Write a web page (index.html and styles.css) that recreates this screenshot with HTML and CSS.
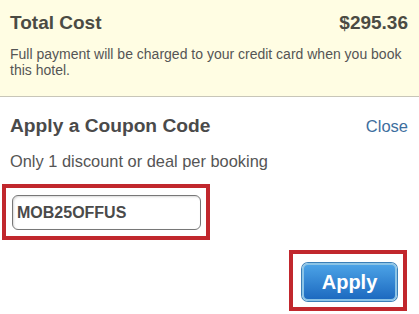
FILE: index.html
```html
<!DOCTYPE html>
<html lang="en">
<head>
  <meta charset="UTF-8" />
  <title>Apply a Coupon Code</title>
  <link rel="stylesheet" href="styles.css">
</head>
<body>
  <div class="total">
    <div class="total-row">
      <span>Total Cost</span>
      <span>$295.36</span>
    </div>
    <p class="note">Full payment will be charged to your credit card when you book this hotel.</p>
  </div>
  <div class="coupon">
    <div class="coupon-head">
      <h2>Apply a Coupon Code</h2>
      <a href="#" class="close">Close</a>
    </div>
    <p class="hint">Only 1 discount or deal per booking</p>
    <div class="mark input-mark">
      <input type="text" class="code" value="MOB25OFFUS" />
    </div>
    <div class="actions">
      <div class="mark button-mark">
        <button class="apply">Apply</button>
      </div>
    </div>
  </div>
</body>
</html>
```

FILE: styles.css
```css
body {
  margin: 0;
  font-family: Arial, "Liberation Sans", sans-serif;
  background-color: #fff;
  color: #4a4a4a;
  width: 419px;
  height: 314px;
  overflow: hidden;
}
.total {
  box-sizing: border-box;
  background-color: #fffde3;
  border-bottom: 1px solid #c8c6b8;
  padding: 12px 11px 0 10px;
  height: 97px;
}
.total-row {
  display: flex;
  justify-content: space-between;
  font-size: 19px;
  font-weight: bold;
  color: #4b4b43;
  line-height: 22px;
}
.note {
  margin: 12px 0 0;
  font-size: 14px;
  line-height: 16px;
  color: #555;
}
.coupon {
  padding: 18px 11px 0 10px;
}
.coupon-head {
  display: flex;
  justify-content: space-between;
  align-items: baseline;
}
.coupon-head h2 {
  margin: 0;
  font-size: 19.2px;
  line-height: 22px;
  color: #4a4a4a;
}
.close {
  color: #3d6e9e;
  text-decoration: none;
  font-size: 16.5px;
}
.hint {
  margin: 15px 0 0;
  font-size: 16.4px;
  line-height: 19px;
  color: #555;
}
.mark {
  border: 4px solid #c1272d;
  box-sizing: border-box;
}
.input-mark {
  margin: 13px 0 0 -8px;
  width: 208px;
  height: 56px;
  padding: 7px 0 0 6px;
}
.code {
  box-sizing: border-box;
  width: 189px;
  height: 35px;
  border: 1px solid #777;
  border-radius: 6px;
  padding: 0 4px;
  font-family: Arial, "Liberation Sans", sans-serif;
  font-size: 16px;
  font-weight: bold;
  color: #4a4a4a;
  box-shadow: inset 1px 1px 2px rgba(0, 0, 0, 0.15);
}
.actions {
  display: flex;
  justify-content: flex-end;
  margin: 10px 1px 0 0;
}
.button-mark {
  width: 118px;
  height: 61px;
  padding: 9px 0 0 9px;
}
.apply {
  box-sizing: border-box;
  width: 95px;
  height: 38px;
  border: 2px solid #8cc4e6;
  border-radius: 6px;
  background: linear-gradient(#4ba2e6, #1d6ac0);
  box-shadow: 0 0 0 1px #3a7fb8;
  color: #fff;
  font-family: Arial, "Liberation Sans", sans-serif;
  font-size: 20px;
  font-weight: bold;
  cursor: pointer;
}
```
